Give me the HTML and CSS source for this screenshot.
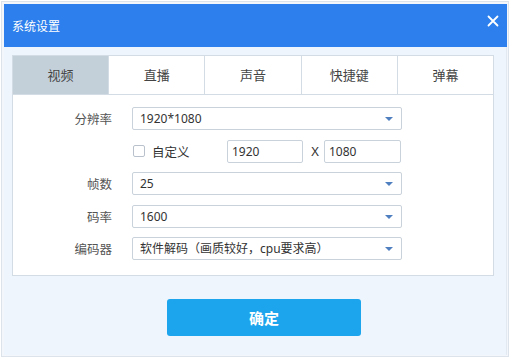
FILE: index.html
```html
<!DOCTYPE html>
<html lang="zh-CN">
<head>
    <meta charset="UTF-8">
    <title>系统设置</title>
    <link rel="stylesheet" href="styles.css">
</head>
<body>
    <div class="dialog">
        <div class="dialog-header">
            <span class="dialog-title">系统设置</span>
            <span class="close-btn">
                <svg width="12" height="12" viewBox="0 0 12 12"><path d="M1.5 1.5L10.5 10.5M10.5 1.5L1.5 10.5" stroke="#fff" stroke-width="1.8" stroke-linecap="round"/></svg>
            </span>
        </div>

        <div class="dialog-body">
            <div class="tabs">
                <div class="tab active">视频</div>
                <div class="tab">直播</div>
                <div class="tab">声音</div>
                <div class="tab">快捷键</div>
                <div class="tab">弹幕</div>
            </div>

            <div class="panel">
                <div class="form-row">
                    <label class="form-label">分辨率</label>
                    <div class="select">1920*1080<span class="arrow"></span></div>
                </div>

                <div class="form-row">
                    <label class="form-label"></label>
                    <span class="checkbox"></span>
                    <span class="check-text">自定义</span>
                    <div class="input">1920</div>
                    <span class="times">X</span>
                    <div class="input">1080</div>
                </div>

                <div class="form-row">
                    <label class="form-label">帧数</label>
                    <div class="select">25<span class="arrow"></span></div>
                </div>

                <div class="form-row">
                    <label class="form-label">码率</label>
                    <div class="select">1600<span class="arrow"></span></div>
                </div>

                <div class="form-row">
                    <label class="form-label">编码器</label>
                    <div class="select">软件解码（画质较好，cpu要求高）<span class="arrow"></span></div>
                </div>
            </div>

            <div class="footer">
                <button class="ok-btn">确定</button>
            </div>
        </div>
    </div>
</body>
</html>
```

FILE: styles.css
```css
* {
    margin: 0;
    padding: 0;
    box-sizing: border-box;
}

body {
    font-family: "Noto Sans", "Noto Sans CJK SC", sans-serif;
    background: #ffffff;
    width: 511px;
    height: 363px;
    overflow: hidden;
}

.dialog {
    margin: 1px 0 0 1px;
    width: 508px;
    height: 356px;
    border: 1px solid #dde3ea;
    padding: 2px 1px 1px 2px;
    background: #f3f7fb;
    display: flex;
    flex-direction: column;
}

.dialog-header {
    height: 43px;
    background: #2c7fec;
    display: flex;
    align-items: center;
    justify-content: space-between;
    padding: 0 8px 0 8px;
    flex-shrink: 0;
}

.dialog-title {
    color: #ffffff;
    font-size: 12px;
}

.close-btn {
    display: flex;
    margin-top: -10px;
}

.dialog-body {
    flex: 1;
    background: #eef5fc;
    padding: 8px 12px 0 8px;
    border-right: 1px solid #e2e9f0;
}

.tabs {
    display: flex;
    border: 1px solid #d3dce5;
    border-bottom: none;
    background: #ffffff;
}

.tab {
    flex: 1;
    height: 38px;
    line-height: 38px;
    text-align: center;
    font-size: 13px;
    color: #444;
    border-left: 1px solid #d3dce5;
}

.tab:first-child {
    border-left: none;
}

.tab.active {
    background: #c3d0da;
}

.panel {
    background: #ffffff;
    border: 1px solid #d3dce5;
    padding: 12px 0 15px 0;
    display: flex;
    flex-direction: column;
    gap: 9.5px;
}

.form-row {
    display: flex;
    align-items: center;
    height: 23px;
    font-size: 12px;
    color: #333;
}

.form-label {
    width: 99px;
    margin-right: 20px;
    text-align: right;
    font-size: 12.5px;
    color: #555;
}

.select {
    position: relative;
    width: 270px;
    height: 23px;
    line-height: 21px;
    border: 1px solid #c9d1da;
    border-radius: 2px;
    padding-left: 7px;
    background: #ffffff;
}

.arrow {
    position: absolute;
    right: 8px;
    top: 9px;
    width: 0;
    height: 0;
    border-left: 4px solid transparent;
    border-right: 4px solid transparent;
    border-top: 4px solid #4f7fbf;
}

.checkbox {
    width: 12px;
    height: 12px;
    border: 1px solid #b9c2cc;
    border-radius: 2px;
    margin-left: 1px;
    background: #ffffff;
}

.check-text {
    margin-left: 7px;
    width: 75px;
    font-size: 12.5px;
}

.input {
    width: 76px;
    height: 23px;
    line-height: 21px;
    border: 1px solid #c9d1da;
    border-radius: 2px;
    padding-left: 4px;
}

.times {
    width: 21px;
    padding-left: 3px;
    text-align: center;
    font-size: 13px;
}

.input:last-child {
    width: 77px;
}

.footer {
    padding: 23px 0 0 155px;
}

.ok-btn {
    width: 194px;
    height: 37px;
    border: none;
    border-radius: 3px;
    background: #1ca4ec;
    color: #ffffff;
    font-family: "Noto Sans CJK SC", sans-serif;
    font-size: 15px;
    font-weight: bold;
}
```
